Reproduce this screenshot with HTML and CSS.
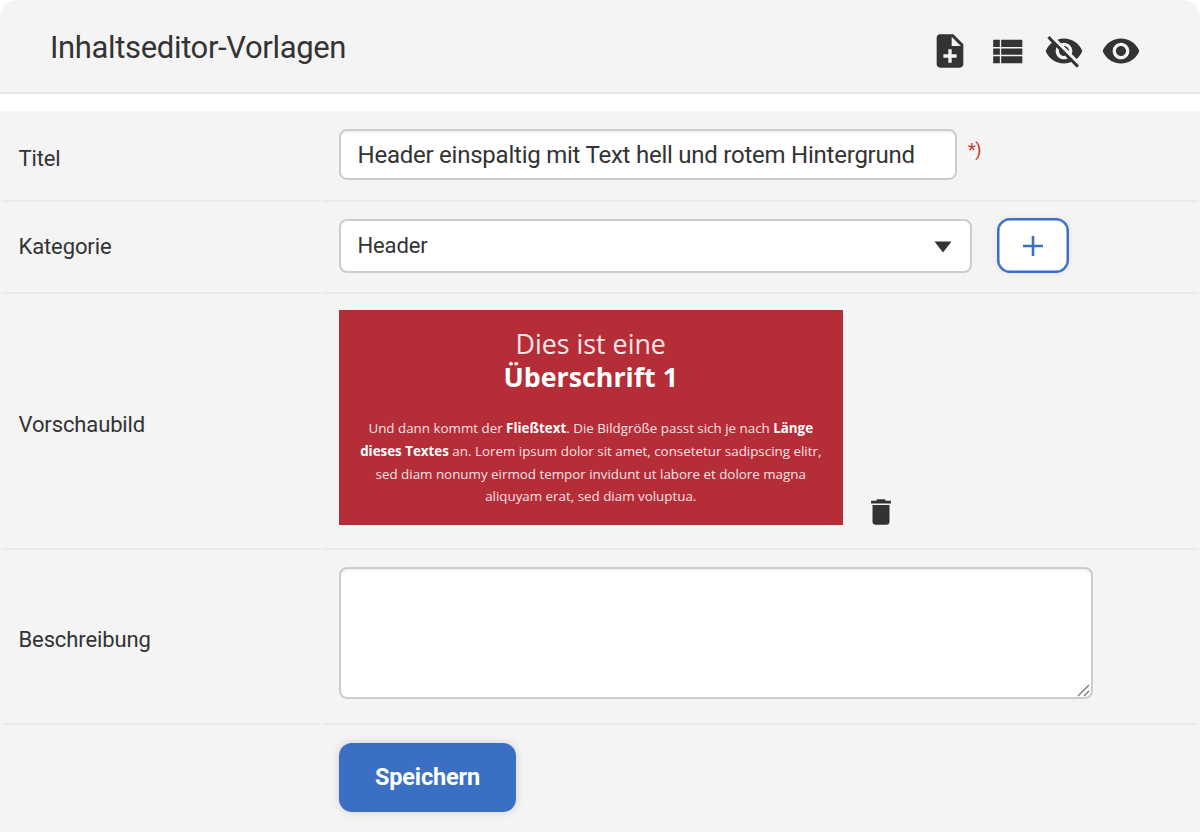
FILE: index.html
```html
<!DOCTYPE html>
<html lang="de">
<head>
<meta charset="utf-8">
<title>Inhaltseditor-Vorlagen</title>
<link rel="stylesheet" href="styles.css">
</head>
<body>
<main class="panel">
  <header class="panel-header">
    <h1 class="title"><span>Inhaltseditor-Vorlagen</span></h1>
    <nav class="toolbar">
      <svg class="icon" viewBox="0 0 24 24"><path d="M14 2H6c-1.1 0-2 .9-2 2v16c0 1.1.9 2 2 2h12c1.1 0 2-.9 2-2V8l-6-6zm2 14h-3v3h-2v-3H8v-2h3v-3h2v3h3v2zm-3-7V3.5L18.5 9H13z"/></svg>
      <svg class="icon" viewBox="0 0 24 24"><path d="M3.700 14.300h4v-3.800h-4v3.800zm0 5.100h4v-4.200h-4v4.200zM3.700 9.600h4V5.200h-4v4.400zM8.500 14.300h12.700v-3.800H8.500v3.800zm0 5.100h12.700v-4.200H8.500v4.200zM8.500 5.200v4.400h12.700V5.200H8.500z"/></svg>
      <svg class="icon" viewBox="0 0 24 24"><path d="M12 7c2.76 0 5 2.24 5 5 0 .65-.13 1.26-.36 1.83l2.92 2.92c1.51-1.26 2.7-2.89 3.43-4.75-1.73-4.39-6-7.5-11-7.5-1.4 0-2.74.25-3.98.7l2.16 2.16C10.74 7.13 11.35 7 12 7zM2 4.27l2.28 2.28.46.46C3.08 8.3 1.78 10.02 1 12c1.73 4.39 6 7.5 11 7.5 1.55 0 3.03-.3 4.38-.84l.42.42L19.73 22 21 20.73 3.27 3 2 4.27zM7.53 9.8l1.55 1.55c-.05.21-.08.43-.08.65 0 1.66 1.34 3 3 3 .22 0 .44-.03.65-.08l1.55 1.55c-.67.33-1.41.53-2.2.53-2.76 0-5-2.24-5-5 0-.79.2-1.53.53-2.2zm4.31-.78l3.15 3.15.02-.16c0-1.66-1.34-3-3-3l-.17.01z"/></svg>
      <svg class="icon" viewBox="0 0 24 24"><path d="M12 4.5C7 4.5 2.73 7.61 1 12c1.73 4.39 6 7.5 11 7.5s9.27-3.11 11-7.5c-1.73-4.39-6-7.5-11-7.5zM12 17c-2.76 0-5-2.24-5-5s2.24-5 5-5 5 2.24 5 5-2.24 5-5 5zm0-8c-1.66 0-3 1.34-3 3s1.34 3 3 3 3-1.34 3-3-1.34-3-3-3z"/></svg>
    </nav>
  </header>
  <form class="form">
    <div class="row row-title">
      <div class="label"><span>Titel</span></div>
      <div class="field">
        <div class="input"><span>Header einspaltig mit Text hell und rotem Hintergrund</span></div>
        <span class="required">*)</span>
      </div>
    </div>
    <div class="row row-category">
      <div class="label"><span>Kategorie</span></div>
      <div class="field">
        <div class="select"><span>Header</span>
          <svg class="caret" viewBox="0 0 18 12"><path d="M0.5 0.5h17L9 11.5z"/></svg>
        </div>
        <button type="button" class="add" aria-label="Hinzufügen"><svg class="plus" viewBox="0 0 20 20"><path d="M10 0v20M0 10h20"/></svg></button>
      </div>
    </div>
    <div class="row row-preview">
      <div class="label"><span>Vorschaubild</span></div>
      <div class="field">
        <div class="preview">
          <div class="preview-light">Dies ist eine</div>
          <div class="preview-bold">Überschrift 1</div>
          <div class="preview-text">
            <div><span>Und dann kommt der <b>Fließtext</b>. Die Bildgröße passt sich je nach <b>Länge</b></span></div>
            <div><span><b>dieses Textes</b> an. Lorem ipsum dolor sit amet, consetetur sadipscing elitr,</span></div>
            <div><span>sed diam nonumy eirmod tempor invidunt ut labore et dolore magna</span></div>
            <div><span>aliquyam erat, sed diam voluptua.</span></div>
          </div>
        </div>
        <svg class="trash" viewBox="0 0 24 24"><path d="M6 19c0 1.100.9 2 2 2h8c1.100 0 2-.9 2-2V7H6v12zM19 4h-3.500q-.5-1-1.500-1h-4q-1 0-1.500 1H5v2h14V4z"/></svg>
      </div>
    </div>
    <div class="row row-description">
      <div class="label"><span>Beschreibung</span></div>
      <div class="field">
        <div class="textarea"><svg class="grip" viewBox="0 0 13 13"><path d="M1 12L12 1M7 12l5-5"/></svg></div>
      </div>
    </div>
    <div class="row row-actions">
      <div class="label"></div>
      <div class="field"><button type="button" class="save">Speichern</button></div>
    </div>
  </form>
</main>
</body>
</html>
```
FILE: styles.css
```css
* { box-sizing: border-box; }
body { margin: 0; background: #fff; color: #333; font-family: Roboto, sans-serif; font-size: 22px; overflow: hidden; }
.panel { width: 1200px; height: 832px; }
.panel-header { display: flex; justify-content: space-between; height: 94px; padding: 0 59px 0 50px; background: #f4f4f4; border-bottom: 2px solid #e8e8e8; border-radius: 18px 18px 0 0; }
.title { margin: 0; font-size: 31px; line-height: 36px; font-weight: 400; letter-spacing: -0.35px; padding-top: 30px; }
.toolbar { display: flex; gap: 17px; padding-top: 31px; }
.icon { width: 40px; height: 40px; fill: #333; }
.form { margin-top: 17px; height: 721px; background: #f4f4f4; }
.row { display: grid; grid-template-columns: 318px 876px; gap: 2px; padding: 0 2px; }
.label, .field { border-bottom: 2px solid #eaeaea; display: flex; }
.label { align-items: center; padding-left: 16.500px; letter-spacing: -0.12px; }
.field { padding-left: 17px; }
.row-title { height: 91px; }
.row-title .label { padding-top: 5px; }
.row-category { height: 92px; }
.row-category .label { padding-bottom: 2px; }
.row-preview { height: 256px; }
.row-preview .label { padding-top: 6px; }
.row-description { height: 175px; }
.row-description .label { padding-top: 6px; }
.row-actions { height: 107px; }
.row-actions .label, .row-actions .field { border: 0; }
.input, .select, .textarea { background: #fff; border: 2px solid #ccc; border-radius: 8px; }
.input { width: 618px; height: 51px; margin-top: 18px; padding-left: 16.500px; font-size: 24px; line-height: 48px; letter-spacing: -0.235px; white-space: nowrap; box-shadow: inset 0 2px 2px #0000000d; }
.required { color: #c0392b; font-size: 18px; line-height: 22px; margin: 28px 0 0 11px; letter-spacing: -0.5px; }
.select { display: flex; align-items: center; justify-content: space-between; width: 633px; height: 54px; margin-top: 17px; padding: 0 18px 1px 16.500px; letter-spacing: -0.12px; }
.caret { width: 18px; height: 12px; margin-top: 2px; fill: #333; }
.add { display: flex; align-items: center; justify-content: center; width: 72px; height: 55px; margin: 16px 0 0 25px; padding: 0; background: #fff; border: 2px solid #3b6fc4; border-radius: 13px; box-shadow: 0 0 6px #00000014, inset 0 0 0 0.500px #3b6fc4; }
.plus { width: 20px; height: 20px; stroke: #3b6fc4; stroke-width: 2.6; }
.preview { width: 503.500px; height: 215px; margin-top: 16px; padding-top: 17px; background: #b52d37; color: #fff; font-family: "Open Sans", sans-serif; text-align: center; white-space: nowrap; }
.preview-light { font-size: 26.800px; line-height: 34px; color: #fae6e8; }
.preview-bold { font-size: 26.800px; line-height: 32px; font-weight: 700; }
.preview-text { margin-top: 24px; font-size: 13.370px; line-height: 22.800px; color: #f9e0e3; }
.preview-text b { color: #fff; }
.trash { width: 34px; height: 34px; margin: 201px 0 0 21.500px; fill: #333; }
.textarea { display: flex; align-items: flex-end; justify-content: flex-end; width: 754px; height: 132px; margin-top: 17px; box-shadow: inset 0 2px 2px #0000000d; }
.grip { width: 13px; height: 13px; margin: 0 1px 0 0; fill: none; stroke: #777; stroke-width: 1.4; }
.save { width: 177px; height: 69px; margin-top: 18px; padding: 0 0 2px; border: 0; border-radius: 13px; background: #3b6fc4; color: #fff; font-family: Roboto, sans-serif; font-size: 23.500px; font-weight: 700; letter-spacing: -0.15px; box-shadow: 0 0 10px #00000026; }
```
